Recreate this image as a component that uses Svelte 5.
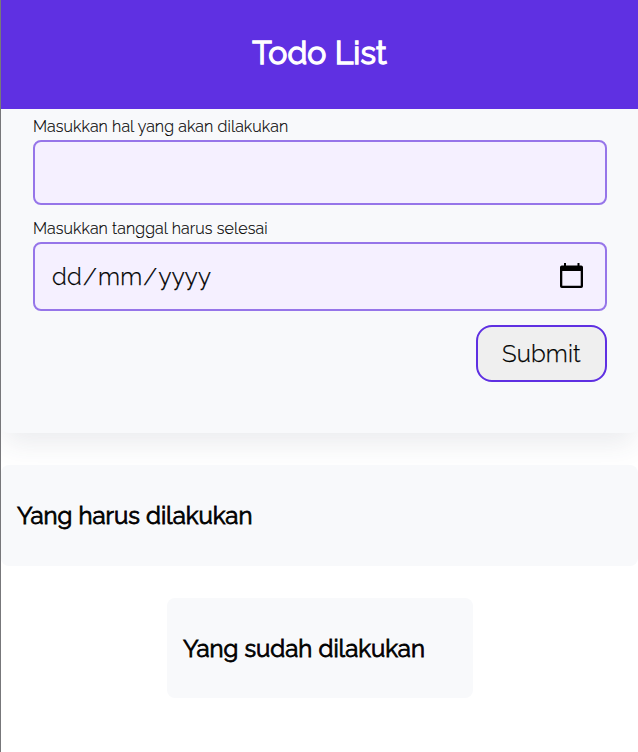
<script>
  let task = $state('');
</script>

<div class="page">
  <header><h1>Todo List</h1></header>

  <main>
    <form onsubmit={(event) => event.preventDefault()}>
      <label for="title">Masukkan hal yang akan dilakukan</label>
      <input id="title" type="text" bind:value={task} />
      <span class="label" id="date-label">Masukkan tanggal harus selesai</span>
      <div class="date" role="group" aria-labelledby="date-label">
        <div class="value"><span>dd</span>/<span>mm</span>/<span>yyyy</span></div>
        <svg viewBox="0 0 23 25" width="23" height="25" aria-hidden="true">
          <path fill-rule="evenodd" d="M4 0h2v2.5h11.5V0h2v2.5h1.7A1.8 1.8 0 0 1 23 4.3v18.9A1.8 1.8 0 0 1 21.2 25H1.8A1.8 1.8 0 0 1 0 23.2V4.3A1.8 1.8 0 0 1 1.8 2.5H4zM2.3 8v14.8h18.4V8z" />
        </svg>
      </div>
      <button type="submit">Submit</button>
    </form>

    <section class="todo"><h2>Yang harus dilakukan</h2></section>
    <section class="done"><h2>Yang sudah dilakukan</h2></section>
  </main>
</div>

<style>
  :global(body) { background: #fff; }
  * { box-sizing: border-box; }
  .page {
    height: 752px;
    overflow: hidden;
    border-left: 1px solid #77777a;
    font-family: Raleway, Lato, 'Open Sans', sans-serif;
    color: #000;
  }
  header {
    height: 109px;
    padding-top: 31px;
    background: #5f30e2;
    color: #fff;
    text-align: center;
    position: relative;
  }
  h1 { margin: 0; font-size: 32px; line-height: 43px; font-weight: 400; letter-spacing: 0.05px; -webkit-text-stroke: 1.3px #fff; }
  form {
    height: 324px;
    padding: 7px 31px 0 32px;
    display: flex;
    flex-direction: column;
    background: #f8f9fb;
    border-radius: 0 0 8px 8px;
    box-shadow: 0 14px 28px -4px rgba(50, 55, 93, 0.1);
  }
  label, .label { height: 24px; font-size: 16px; line-height: 21px; font-weight: 300; letter-spacing: 0.1px; white-space: nowrap; -webkit-text-stroke: 0.15px #000; }
  input, .date {
    width: 100%;
    border: 2px solid #9675e9;
    border-radius: 8px;
    background: #f5f0ff;
    font: 300 24px/28px Raleway, Lato, sans-serif;
    padding: 0 17px;
    outline: none;
  }
  input { height: 65px; margin-bottom: 13px; }
  .date {
    height: 69px;
    padding: 0 22px 2px 16px;
    display: flex;
    align-items: center;
    justify-content: space-between;
  }
  .value { padding-top: 2px; letter-spacing: 0.2px; -webkit-text-stroke: 0.25px #000; }
  .value span { padding: 0 1px; }
  button {
    width: 131px;
    height: 57px;
    margin-top: 14px;
    padding: 0;
    align-self: flex-end;
    border: 2px solid #5f30e2;
    border-radius: 16px;
    background: #efefef;
    color: #000;
    font: 300 24px/28px Raleway, Lato, sans-serif;
    letter-spacing: 0.15px;
    -webkit-text-stroke: 0.25px #000;
  }
  section { background: #f8f9fb; border-radius: 8px; padding: 35px 16px; position: relative; }
  h2 { margin: 0; font-size: 24px; line-height: 31px; font-weight: 400; white-space: nowrap; -webkit-text-stroke: 0.8px #000; }
  .todo { height: 101px; margin-top: 32px; }
  .done { width: 306px; height: 100px; margin: 32px auto 0 166px; }
</style>
